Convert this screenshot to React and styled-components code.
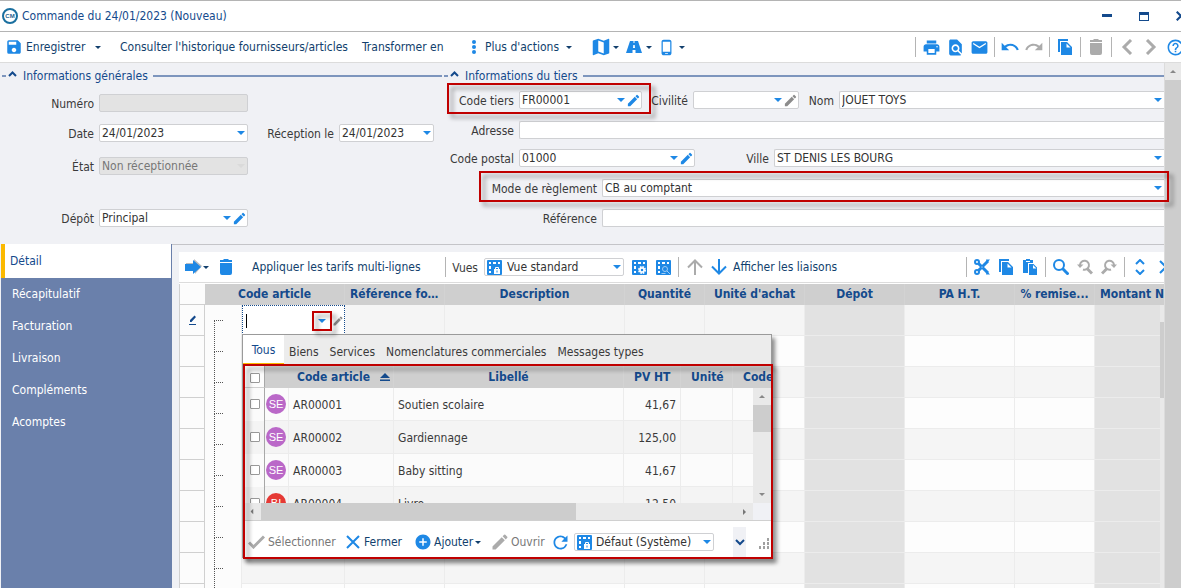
import React from 'react';
import styled, { createGlobalStyle, css } from 'styled-components';
import {
  MdAddCircle,
  MdEdit,
  MdEmail,
  MdFindInPage,
  MdHelpOutline,
  MdMap,
  MdPhoneAndroid,
  MdPrint,
  MdRedo,
  MdRefresh,
  MdSave,
  MdUndo
} from 'react-icons/md';

const blue = '#1e88e5';
const navy = '#144a8c';
const grey = '#ababab';
const red = '#c00000';

const GlobalStyles = createGlobalStyle`
  * {
    box-sizing: border-box;
  }
  body {
    margin: 0;
    overflow: hidden;
    background: #f0f1f5;
  }
  body, button, input, select {
    font-family: 'DejaVu Sans Condensed', 'DejaVu Sans', sans-serif;
    font-size: 12px;
    line-height: 16px;
    color: #3a3a3a;
  }
  button {
    border: 0;
    padding: 0;
    background: none;
    white-space: nowrap;
  }
  svg {
    display: block;
    flex: none;
  }
`;

const Shell = styled.div`
  display: flex;
  flex-direction: column;
  height: 100vh;
  overflow: hidden;
`;

const TitleBar = styled.header`
  display: flex;
  align-items: center;
  height: 32px;
  flex: none;
  padding-left: 2px;
  margin-right: -18px;
  background: #fff;
  border-top: 1px solid #b4b4b4;
  border-bottom: 1px solid #b4b4b4;
`;

const Title = styled.h1`
  flex: 1;
  margin: 0;
  padding-left: 4px;
  font-size: 12px;
  font-weight: normal;
  color: ${navy};
`;

const WindowButton = styled.button`
  display: flex;
  justify-content: center;
  width: 37px;
  color: ${navy};
`;

const MainBar = styled.div`
  display: flex;
  flex: none;
  height: 31px;
  margin-right: -6px;
  background: #fff;
  border-bottom: 1px solid #dcdcdc;
`;

const MainActions = styled.div`
  display: grid;
  grid-template-columns: 90px 25px 242px 108px 120px 36px 32px 30px;
  padding-left: 5px;
`;

const Tools = styled.div`
  display: flex;
  align-items: center;
  margin-left: auto;
`;

const Tool = styled.button`
  display: flex;
  align-items: center;
  justify-content: center;
  width: 24px;
  height: 24px;
  color: ${p => (p.disabled ? grey : blue)};
`;

const Separator = styled.div`
  width: 1px;
  height: 20px;
  margin: 0 3px;
  background: #b4b4b4;
`;

const Action = styled.button`
  display: flex;
  align-items: center;
  gap: ${p => p.$gap || 4}px;
  color: ${p => (p.disabled ? '#777' : '#123f6d')};
  > svg {
    color: ${p => (p.disabled ? grey : blue)};
  }
`;

const Body = styled.div`
  display: flex;
  flex: 1;
  min-height: 0;
`;

const Content = styled.main`
  display: flex;
  flex-direction: column;
  flex: 1;
  min-width: 0;
`;

const PageScroll = styled.div`
  display: flex;
  justify-content: center;
  width: 17px;
  flex: none;
  padding-top: 7px;
  color: #888;
  background: linear-gradient(#e9e9e9 17px, #cdcdcd 17px);
  border-left: 1px solid #dcdcdc;
`;

const Form = styled.form`
  display: grid;
  grid-template-columns: 442px 1fr;
  flex: none;
  padding-bottom: 17px;
`;

const Legend = styled.h2`
  display: flex;
  align-items: center;
  height: 26px;
  margin: 0;
  padding-left: 2px;
  font-size: 12px;
  font-weight: normal;
  color: ${navy};
  svg {
    margin: 0 6px 4px 2px;
  }
  &::before,
  &::after {
    content: '';
    width: 4px;
    height: 2px;
    background: #7d95bd;
  }
  &::after {
    flex: 1;
    margin-left: 5px;
  }
`;

const Rows = styled.div`
  display: grid;
  grid-template-rows: ${p => p.$rows};
  padding-top: ${p => p.$top}px;
`;

const Line = styled.div`
  position: relative;
  display: flex;
  align-items: center;
  gap: 5px;
  height: 18px;
`;

const Label = styled.label`
  flex: none;
  width: ${p => p.$w}px;
  padding-top: 2px;
  text-align: right;
  white-space: nowrap;
`;

const Box = styled.div`
  position: relative;
  display: flex;
  align-items: center;
  gap: ${p => p.$gap || 1}px;
  height: 18px;
  width: ${p => (p.$w ? `${p.$w}px` : 'auto')};
  flex: ${p => (p.$w ? 'none' : '1')};
  min-width: 0;
  padding: 0 ${p => (p.$edit ? 0 : 2)}px 0 2px;
  background: ${p => (p.$off ? '#e3e3e3' : '#fff')};
  border: 1px solid #cfd0d3;
  border-radius: 2px;
  ${p =>
    !p.$w &&
    css`
      border-right: 0;
      border-radius: 2px 0 0 2px;
    `}
`;

const control = css`
  flex: 1;
  min-width: 0;
  height: 16px;
  padding: 0;
  border: 0;
  outline: 0;
  background: transparent;
  color: #333;
  &:disabled {
    color: #777;
    opacity: 1;
  }
`;

const Input = styled.input`
  ${control}
`;

const Select = styled.select`
  ${control}
  appearance: none;
`;

const EditButton = styled.button`
  display: flex;
  color: ${p => (p.disabled ? '#8c8c8c' : blue)};
`;

const Frame = styled.div`
  position: absolute;
  z-index: 3;
  top: ${p => p.$top}px;
  right: ${p => p.$right}px;
  bottom: ${p => p.$bottom}px;
  left: ${p => p.$left}px;
  border: 2px solid ${red};
  filter: drop-shadow(4px 4px 2px rgba(0, 0, 0, 0.4));
  pointer-events: none;
`;

const Lower = styled.div`
  display: flex;
  flex: 1;
  min-height: 0;
`;

const Nav = styled.nav`
  display: flex;
  flex-direction: column;
  width: 172px;
  flex: none;
  background: #6a80ab;
  border-left: 1px solid #f0f1f5;
`;

const NavLink = styled.a`
  display: flex;
  align-items: center;
  height: 32px;
  padding-left: 11px;
  color: #fff;
  text-decoration: none;
  ${p =>
    p.$active &&
    css`
      height: 34px;
      margin-right: 1px;
      padding-left: 5px;
      color: ${navy};
      background: #fff;
      border-left: 4px solid #fbb900;
    `}
`;

const Detail = styled.section`
  display: flex;
  flex-direction: column;
  flex: 1;
  min-width: 0;
  padding: 7px 0 0 7px;
  border-top: 1px solid #c4c4c8;
`;

const GridBar = styled.div`
  display: flex;
  flex: none;
  height: 31px;
  overflow: hidden;
  background: #fff;
  border-bottom: 1px solid #dcdcdc;
`;

const GridActions = styled.div`
  display: grid;
  align-items: center;
  grid-template-columns: 29px 38px 190px 10px 32px 143px 24px 24px 8px 24px 26px 130px;
  padding-left: 6px;
`;

const GridTools = styled(Tools)`
  margin-right: -12px;
`;

const GridArea = styled.div`
  position: relative;
  flex: 1;
  min-height: 0;
  overflow: hidden;
  padding-top: 1px;
  background: #fff;
`;

const Grid = styled.table`
  table-layout: fixed;
  width: 100%;
  min-width: 1026px;
  border-spacing: 0;
`;

const Th = styled.th`
  height: 21px;
  padding: 0 5px 2px;
  overflow: hidden;
  text-overflow: ellipsis;
  white-space: nowrap;
  text-align: ${p => p.$align || 'center'};
  color: ${navy};
  background: #cfcfcf;
  border-right: 1px solid #d3d3d3;
`;

const MarkHead = styled.th`
  background: #fcfcfc;
  border: solid #d0d0d0;
  border-width: 0 0 1px 1px;
`;

const MarkCell = styled.td`
  padding: 0 0 0 9px;
  color: ${navy};
  background: #fcfcfc;
  border: solid #d0d0d0;
  border-width: 0 1px 1px 1px;
`;

const TreeCell = styled.td`
  position: relative;
  padding: 0;
  background: #fcfcfc;
  border-right: 1px solid #ececec;
  &::before {
    content: '';
    position: absolute;
    z-index: 1;
    top: 15px;
    left: 9px;
    width: 8px;
    height: 31px;
    border: dotted #555;
    border-width: 1px 0 0 1px;
  }
`;

const Cell = styled.td`
  height: 31px;
  padding: 0;
  background: ${p => (p.$shaded ? '#e2e2e2' : p.$odd ? '#f5f5f5' : '#fdfdfd')};
  border: solid #ececec;
  border-width: 0 1px 1px 0;
`;

const GridScroll = styled.div`
  position: absolute;
  top: 22px;
  right: 0;
  bottom: 0;
  width: 4px;
  padding-top: 17px;
  background: #e9e9e9;
`;

const GridThumb = styled.div`
  height: 76px;
  background: #cdcdcd;
`;

const Editor = styled.div`
  position: relative;
  display: flex;
  align-items: center;
  height: 30px;
  margin-right: -1px;
  padding: 0 0 0 3px;
  background: #fff;
  border: 1px dotted ${navy};
  border-bottom: 0;
`;

const TextCursor = styled.span`
  width: 1px;
  height: 14px;
  background: #000;
`;

const OpenButton = styled.button`
  position: relative;
  display: flex;
  align-items: center;
  justify-content: center;
  width: 20px;
  height: 20px;
`;

const Popup = styled.div`
  position: absolute;
  z-index: 2;
  top: 28px;
  left: -1px;
  width: 530px;
  background: #fff;
  border: 1px solid #9a9a9a;
  border-bottom: 0;
  box-shadow: 3px 4px 4px rgba(0, 0, 0, 0.45);
`;

const Tabs = styled.div`
  display: flex;
  height: 29px;
  background: #ececec;
`;

const Tab = styled.button`
  padding: 4px 0 0 0;
  margin-left: 11px;
  ${p =>
    p.$active &&
    css`
      width: 41px;
      margin: 0 -6px 0 0;
      padding: 2px 0 0 0;
      color: ${navy};
      background: #fff;
      border-bottom: 1px solid #fbb900;
    `}
`;

const ListArea = styled.div`
  position: relative;
  height: 139px;
  overflow: hidden;
`;

const List = styled.table`
  table-layout: fixed;
  width: 549px;
  border-spacing: 0;
`;

const ListTh = styled(Th)`
  height: 24px;
  padding: ${p => (p.$sorted ? '1px 3px 0 0' : '1px 10px 0')};
  text-overflow: clip;
`;

const Sort = styled.div`
  display: flex;
  align-items: center;
  justify-content: flex-end;
  gap: 10px;
`;

const CheckTh = styled.th`
  padding: 4px 0 0 7px;
  background: #fcfcfc;
  border-right: 1px solid #a8a8a8;
  border-bottom: 1px solid #d0d0d0;
`;

const CheckTd = styled.td`
  padding: 0 0 2px 7px;
  border-right: 1px solid #a8a8a8;
`;

const Checkbox = styled.input`
  display: block;
  appearance: none;
  width: 10px;
  height: 10px;
  margin: 0;
  background: #fff;
  border: 1px solid #999;
  border-radius: 1px;
`;

const ListTr = styled.tr`
  background: ${p => (p.$odd ? '#fbfbfb' : '#f4f4f4')};
`;

const ListTd = styled.td`
  height: 33px;
  padding: 2px 4px 0;
  text-align: ${p => p.$align || 'left'};
  white-space: nowrap;
  border: solid #ececec;
  border-width: 0 1px 1px 0;
`;

const BadgeTd = styled(ListTd)`
  padding: 0 1px;
`;

const Badge = styled.div`
  width: 20px;
  height: 20px;
  border-radius: 50%;
  text-align: center;
  font: 11px/20px 'Liberation Sans', sans-serif;
  color: #fff;
  background: ${p => (p.children === 'SE' ? '#ba68c8' : '#e53935')};
`;

const ListScroll = styled.div`
  position: absolute;
  top: 24px;
  right: 0;
  bottom: 0;
  width: 18px;
  display: flex;
  flex-direction: column;
  align-items: center;
  padding: 7px 0;
  color: #888;
  background: linear-gradient(#e9e9e9 17px, #cdcdcd 17px, #cdcdcd 44px, #e9e9e9 44px);
`;

const Down = styled.div`
  margin-top: auto;
  transform: rotate(180deg);
`;

const ListHScroll = styled.div`
  display: grid;
  grid-template-columns: 18px 315px 1fr 17px 18px;
  height: 18px;
  color: #777;
  background: #e9e9e9;
  border-bottom: 1px solid #d0d0d0;
`;

const HButton = styled.div`
  display: flex;
  align-items: center;
  justify-content: center;
  transform: rotate(${p => p.$turn}deg);
`;

const HThumb = styled.div`
  background: #cdcdcd;
`;

const Corner = styled.div`
  background: #f0f1f5;
`;

const PopupBar = styled.div`
  display: grid;
  align-items: center;
  grid-template-columns: 98px 68px 76px 58px 26px 140px 1fr 13px 25px;
  height: 37px;
  padding: 5px 0 0 5px;
`;

const Expand = styled.button`
  display: flex;
  align-items: center;
  justify-content: center;
  grid-column: 8;
  height: 30px;
  color: ${navy};
  background: #f0f1f5;
`;

const GripArea = styled.div`
  display: flex;
  justify-content: flex-end;
  padding: 4px 1px 0 0;
`;

const Caret = ({ color = '#123f6d', w = 6 }) => (
  <svg width={w} height={w / 2} viewBox="0 0 8 4">
    <path d="M0 0h8L4 4z" fill={color} />
  </svg>
);

const ScrollArrow = () => (
  <svg width="6" height="3" viewBox="0 0 6 3">
    <path d="M0 3h6L3 0z" fill="currentColor" />
  </svg>
);

const Logo = () => (
  <svg width="16" height="16" viewBox="0 0 16 16">
    <circle cx="8" cy="8" r="7" fill="#fff" stroke="#1a6f9f" strokeWidth="2" />
    <text x="8" y="10" textAnchor="middle" fontSize="6" fontWeight="bold" fontFamily="Liberation Sans" fill="#1a5f8f">
      CM
    </text>
  </svg>
);

const Collapse = () => (
  <svg width="9" height="6" viewBox="0 0 9 6">
    <path d="M1 5l3.500-3.500L8 5" fill="none" stroke={navy} strokeWidth="2" />
  </svg>
);

const Cross = ({ size, width }) => (
  <svg width={size} height={size} viewBox="0 0 14 14">
    <path d="M1 1l12 12M13 1L1 13" fill="none" stroke="currentColor" strokeWidth={width} />
  </svg>
);

const Check = () => (
  <svg width="17" height="14" viewBox="0 0 17 14">
    <path d="M1 7.500l4.500 4.500L16 1.500" fill="none" stroke="currentColor" strokeWidth="3" />
  </svg>
);

const Dots = () => (
  <svg width="8" height="14" viewBox="0 0 8 14">
    <circle cx="4" cy="2" r="2" fill="currentColor" />
    <circle cx="4" cy="7" r="2" fill="currentColor" />
    <circle cx="4" cy="12" r="2" fill="currentColor" />
  </svg>
);

const Road = () => (
  <svg width="16" height="12" viewBox="0 0 16 12">
    <path
      d="M4 0h3.500v2h1V0H12l4 12H9.500V9h-3v3H0zM7.300 4L7 7h2l-.3-3z"
      fill="currentColor"
      fillRule="evenodd"
    />
  </svg>
);

const Trash = () => (
  <svg width="12" height="16" viewBox="0 0 12 16">
    <path d="M0 1h3l1-1h4l1 1h3v2H0zM0 4h12v10q0 2-2 2H2q-2 0-2-2z" fill="currentColor" />
  </svg>
);

const Scissors = () => (
  <svg width="16" height="16" viewBox="0 0 16 16">
    <g fill="none" stroke="currentColor" strokeWidth="2">
      <circle cx="3" cy="3" r="2" />
      <circle cx="3" cy="13" r="2" />
    </g>
    <path d="M4.500 4.500L14 14M4.500 11.500L14 2" stroke="currentColor" strokeWidth="3" />
    <path d="M12 15.500h4L13 12zM12 .5h4L13 4z" fill="currentColor" />
    <circle cx="8" cy="8" r="0.600" fill="#fff" />
  </svg>
);

const Copy = () => (
  <svg width="15" height="16" viewBox="0 0 15 16">
    <path d="M0 0h10v2H2v11H0z" fill="currentColor" />
    <path d="M3 3h6l5 5v8H3zM8.500 4.500v4h4z" fill="currentColor" fillRule="evenodd" />
  </svg>
);

const Paste = () => (
  <svg width="15" height="16" viewBox="0 0 15 16">
    <path d="M0 1h3V0h4v1h3v3H5v10H0z" fill="currentColor" />
    <path d="M6 5h4.500L14 8.500V16H6zM10 6v3.500h3.500z" fill="currentColor" fillRule="evenodd" />
    <path d="M3 2.500h4" stroke="#fff" />
  </svg>
);

const Chevron = ({ d }) => (
  <svg width="16" height="16" viewBox="0 0 16 16">
    <path d={d} fill="none" stroke="currentColor" strokeWidth="3" />
  </svg>
);

const Fold = ({ d }) => (
  <svg width="10" height="16" viewBox="0 0 10 16">
    <path d={d} fill="none" stroke="currentColor" strokeWidth="2" />
  </svg>
);

const BigArrow = () => (
  <svg width="17" height="16" viewBox="0 0 17 16">
    <path d="M1 4h8V0l8 7-7 8V12H1z" fill="#b9bcc0" />
    <path d="M0 5h8V1l8 7-8 7v-3H0z" fill="currentColor" />
  </svg>
);

const Arrow = ({ down }) => (
  <svg width="16" height="16" viewBox="0 0 16 16">
    <path
      d={down ? 'M8 0v14M1 7.500L8 14.500L15 7.500' : 'M8 16V2M1 8.500L8 1.500L15 8.500'}
      fill="none"
      stroke="currentColor"
      strokeWidth="2"
    />
  </svg>
);

const ViewIcon = ({ mark }) => (
  <svg width="15" height="15" viewBox="0 0 15 15">
    <rect width="15" height="15" rx="1" fill={blue} />
    <path
      d="M2 2h2v2H2zM6 2h3v2H6zM11 2h2v2h-2zM2 6h2v3H2zM2 11h2v2H2z"
      fill="#fff"
    />
    {mark === 'lock' && (
      <g>
        <path d="M7 9h6v5H7z" fill="#fff" />
        <path d="M8.500 9V7.500h3V9" fill="none" stroke="#fff" />
        <path d="M9.500 10.500h1v2h-1z" fill={blue} />
      </g>
    )}
    {mark === 'gear' && (
      <g>
        <circle cx="10" cy="10" r="3" fill="none" stroke="#fff" strokeWidth="2" strokeDasharray="1.600 0.750" />
        <circle cx="10" cy="10" r="2" fill="none" stroke="#fff" strokeWidth="1.500" />
      </g>
    )}
    {mark === 'find' && (
      <g>
        <circle cx="9" cy="9" r="2.500" fill="none" stroke="#9fcbf3" />
        <path d="M11 11l3 3M5.500 13.500h4" stroke="#9fcbf3" />
      </g>
    )}
  </svg>
);

const Search = ({ turn }) => (
  <svg width="16" height="16" viewBox="0 0 16 16">
    {!turn && <circle cx="6" cy="6" r="5" fill="none" stroke="currentColor" strokeWidth="2" />}
    {!turn && <path d="M9.500 9.500l6 6" stroke="currentColor" strokeWidth="3" />}
    {turn && (
      <g transform={turn === 'right' ? 'matrix(-1 0 0 1 16 0)' : undefined}>
        <path d="M3 6a4.500 4.500 0 1 1 3 4.500" fill="none" stroke="currentColor" strokeWidth="2" />
        <path d="M0 5.500h6.500L3 9z" fill="currentColor" />
        <path d="M10 9.500l5 5" stroke="currentColor" strokeWidth="3" />
      </g>
    )}
  </svg>
);

const RowPencil = () => (
  <svg width="8" height="10" viewBox="0 0 8 10">
    <path d="M1 7V5l4.500-4.500L7 2 2.500 7zM0 9h7v1H0z" fill="currentColor" />
  </svg>
);

const SortMark = () => (
  <svg width="10" height="8" viewBox="0 0 10 8">
    <path d="M0 5l5-5 5 5zM0 6.500h10V8H0z" fill={navy} />
  </svg>
);

const Grip = () => (
  <svg width="12" height="12" viewBox="0 0 12 12">
    <path
      d="M9 0h2v3H9zM5 4h2v3H5zM9 4h2v3H9zM1 8h2v3H1zM5 8h2v3H5zM9 8h2v3H9z"
      fill="#a0a0a0"
    />
  </svg>
);

const Combo = ({ id, value, w, off, edit, label }) => (
  <Box $w={w} $off={off} $edit={edit}>
    <Select id={id} defaultValue={value} disabled={off} aria-label={label}>
      <option>{value}</option>
    </Select>
    <Caret color={off ? '#dadada' : blue} w={8} />
    {edit && (
      <EditButton type="button" aria-label="Modifier" disabled={edit === 'off'}>
        <MdEdit size={15} />
      </EditButton>
    )}
  </Box>
);

const columns = [
  ['Référence fo...', 100],
  ['Description', 180],
  ['Quantité', 80],
  ["Unité d'achat", 100],
  ['Dépôt', 100, true],
  ['PA H.T.', 110],
  ['% remise...', 80],
  ['Montant N', 110, true]
];

const articles = [
  ['SE', 'AR00001', 'Soutien scolaire', '41,67'],
  ['SE', 'AR00002', 'Gardiennage', '125,00'],
  ['SE', 'AR00003', 'Baby sitting', '41,67'],
  ['BI', 'AR00004', 'Livre', '12,50']
];

const navItems = ['Détail', 'Récapitulatif', 'Facturation', 'Livraison', 'Compléments', 'Acomptes'];
const tabItems = ['Tous', 'Biens', 'Services', 'Nomenclatures commerciales', 'Messages types'];

const ArticlePopup = () => (
  <Popup>
    <Tabs>
      {tabItems.map((tab, i) => (
        <Tab key={tab} $active={i === 0}>
          {tab}
        </Tab>
      ))}
    </Tabs>
    <ListArea>
      <List>
        <colgroup>
          {[22, 24, 105, 230, 57, 52, 59].map((w, i) => (
            <col key={i} width={w} />
          ))}
        </colgroup>
        <thead>
          <tr>
            <CheckTh>
              <Checkbox type="checkbox" aria-label="Tout cocher" />
            </CheckTh>
            <ListTh colSpan={2} $sorted>
              <Sort>
                Code article <SortMark />
              </Sort>
            </ListTh>
            <ListTh>Libellé</ListTh>
            <ListTh>PV HT</ListTh>
            <ListTh>Unité</ListTh>
            <ListTh $align="left">Code</ListTh>
          </tr>
        </thead>
        <tbody>
          {articles.map(([kind, code, name, price], i) => (
            <ListTr key={code} $odd={i % 2 === 0}>
              <CheckTd>
                <Checkbox type="checkbox" aria-label={code} />
              </CheckTd>
              <BadgeTd>
                <Badge>{kind}</Badge>
              </BadgeTd>
              <ListTd>{code}</ListTd>
              <ListTd>{name}</ListTd>
              <ListTd $align="right">{price}</ListTd>
              <ListTd />
              <ListTd />
            </ListTr>
          ))}
        </tbody>
      </List>
      <ListScroll>
        <ScrollArrow />
        <Down>
          <ScrollArrow />
        </Down>
      </ListScroll>
    </ListArea>
    <ListHScroll>
      <HButton $turn={-90}>
        <ScrollArrow />
      </HButton>
      <HThumb />
      <div />
      <HButton $turn={90}>
        <ScrollArrow />
      </HButton>
      <Corner />
    </ListHScroll>
    <PopupBar>
      <Action disabled $gap={3}>
        <Check />
        Sélectionner
      </Action>
      <Action>
        <Cross size={14} width={2} />
        Fermer
      </Action>
      <Action $gap={2}>
        <MdAddCircle size={18} />
        Ajouter
        <Caret />
      </Action>
      <Action disabled $gap={1}>
        <MdEdit size={20} />
        Ouvrir
      </Action>
      <Tool aria-label="Actualiser">
        <MdRefresh size={21} />
      </Tool>
      <Box $w={140} $gap={4}>
        <ViewIcon mark="lock" />
        <Select aria-label="Vue de la liste" defaultValue="Défaut (Système)">
          <option>Défaut (Système)</option>
        </Select>
        <Caret color={blue} w={8} />
      </Box>
      <Expand aria-label="Plus">
        <svg width="10" height="7" viewBox="0 0 10 7">
          <path d="M1 1l4 4 4-4" fill="none" stroke="currentColor" strokeWidth="2" />
        </svg>
      </Expand>
      <GripArea>
        <Grip />
      </GripArea>
    </PopupBar>
    <Frame $top={29} $right={-2} $bottom={-1} $left={0} />
  </Popup>
);

function App() {
  return (
    <Shell>
      <GlobalStyles />
      <TitleBar>
        <Logo />
        <Title>Commande du 24/01/2023 (Nouveau)</Title>
        <WindowButton aria-label="Réduire">
          <svg width="10" height="10" viewBox="0 0 10 10">
            <path d="M0 3h10v3H0z" fill={navy} />
          </svg>
        </WindowButton>
        <WindowButton aria-label="Agrandir">
          <svg width="10" height="9" viewBox="0 0 10 9">
            <path d="M0 0h10v9H0zM1 3v5h8V3z" fill={navy} fillRule="evenodd" />
          </svg>
        </WindowButton>
        <WindowButton aria-label="Fermer">
          <Cross size={10} width={3} />
        </WindowButton>
      </TitleBar>

      <MainBar>
        <MainActions>
          <Action $gap={3}>
            <MdSave size={18} />
            Enregistrer
          </Action>
          <Action aria-label="Options d'enregistrement">
            <Caret />
          </Action>
          <Action>Consulter l'historique fournisseurs/articles</Action>
          <Action>Transformer en</Action>
          <Action $gap={7}>
            <Dots />
            Plus d'actions
            <Caret />
          </Action>
          <Action aria-label="Carte" $gap={1}>
            <MdMap size={22} />
            <Caret />
          </Action>
          <Action aria-label="Itinéraire">
            <Road />
            <Caret />
          </Action>
          <Action aria-label="Téléphone">
            <MdPhoneAndroid size={17} />
            <Caret />
          </Action>
        </MainActions>
        <Tools>
          <Separator />
          <Tool aria-label="Imprimer">
            <MdPrint size={19} />
          </Tool>
          <Tool aria-label="Aperçu">
            <MdFindInPage size={19} />
          </Tool>
          <Tool aria-label="Courriel">
            <MdEmail size={19} />
          </Tool>
          <Separator />
          <Tool aria-label="Annuler">
            <MdUndo size={20} />
          </Tool>
          <Tool aria-label="Rétablir" disabled>
            <MdRedo size={20} />
          </Tool>
          <Separator />
          <Tool aria-label="Dupliquer">
            <Copy />
          </Tool>
          <Separator />
          <Tool aria-label="Supprimer" disabled>
            <Trash />
          </Tool>
          <Separator />
          <Tool aria-label="Précédent" disabled>
            <Chevron d="M12 1L5 8l7 7" />
          </Tool>
          <Tool aria-label="Suivant" disabled>
            <Chevron d="M4 1l7 7-7 7" />
          </Tool>
          <Tool aria-label="Aide">
            <MdHelpOutline size={19} />
          </Tool>
        </Tools>
      </MainBar>

      <Body>
        <Content>
          <Form>
            <div>
              <Legend>
                <Collapse />
                Informations générales
              </Legend>
              <Rows $top={5} $rows="30px 33px 52px 18px">
                <Line>
                  <Label $w={94} htmlFor="numero">
                    Numéro
                  </Label>
                  <Box $w={149} $off>
                    <Input id="numero" disabled />
                  </Box>
                </Line>
                <Line>
                  <Label $w={94} htmlFor="date">
                    Date
                  </Label>
                  <Combo id="date" value="24/01/2023" w={149} />
                  <Label $w={81} htmlFor="reception">
                    Réception le
                  </Label>
                  <Combo id="reception" value="24/01/2023" w={95} />
                </Line>
                <Line>
                  <Label $w={94} htmlFor="etat">
                    État
                  </Label>
                  <Combo id="etat" value="Non réceptionnée" w={149} off />
                </Line>
                <Line>
                  <Label $w={94} htmlFor="depot">
                    Dépôt
                  </Label>
                  <Combo id="depot" value="Principal" w={149} edit="on" />
                </Line>
              </Rows>
            </div>
            <div>
              <Legend>
                <Collapse />
                Informations du tiers
              </Legend>
              <Rows $top={2} $rows="30px 28px 30px 30px 18px">
                <Line>
                  <Label $w={72} htmlFor="tiers">
                    Code tiers
                  </Label>
                  <Combo id="tiers" value="FR00001" w={123} edit="on" />
                  <Label $w={41} htmlFor="civilite">
                    Civilité
                  </Label>
                  <Combo id="civilite" value="" w={106} edit="off" />
                  <Label $w={30} htmlFor="nom">
                    Nom
                  </Label>
                  <Combo id="nom" value="JOUET TOYS" />
                  <Frame $top={-8} $right={513} $bottom={-5} $left={5} />
                </Line>
                <Line>
                  <Label $w={72} htmlFor="adresse">
                    Adresse
                  </Label>
                  <Box>
                    <Input id="adresse" />
                  </Box>
                </Line>
                <Line>
                  <Label $w={72} htmlFor="cp">
                    Code postal
                  </Label>
                  <Combo id="cp" value="01000" w={176} edit="on" />
                  <Label $w={69} htmlFor="ville">
                    Ville
                  </Label>
                  <Combo id="ville" value="ST DENIS LES BOURG" />
                </Line>
                <Line>
                  <Label $w={155} htmlFor="reglement">
                    Mode de règlement
                  </Label>
                  <Combo id="reglement" value="CB au comptant" />
                  <Frame $top={-8} $right={-5} $bottom={-5} $left={37} />
                </Line>
                <Line>
                  <Label $w={155} htmlFor="reference">
                    Référence
                  </Label>
                  <Box>
                    <Input id="reference" />
                  </Box>
                </Line>
              </Rows>
            </div>
          </Form>

          <Lower>
            <Nav>
              {navItems.map((item, i) => (
                <NavLink key={item} href={`#${i}`} $active={i === 0}>
                  {item}
                </NavLink>
              ))}
            </Nav>
            <Detail>
              <GridBar>
                <GridActions>
                  <Action aria-label="Insérer" $gap={1}>
                    <BigArrow />
                    <Caret />
                  </Action>
                  <Tool aria-label="Supprimer la ligne">
                    <Trash />
                  </Tool>
                  <Action>Appliquer les tarifs multi-lignes</Action>
                  <Separator />
                  <Label $w={26} htmlFor="vue">
                    Vues
                  </Label>
                  <Box $w={140} $gap={5}>
                    <ViewIcon mark="lock" />
                    <Select id="vue" defaultValue="Vue standard">
                      <option>Vue standard</option>
                    </Select>
                    <Caret color={blue} w={8} />
                  </Box>
                  <Tool aria-label="Configurer la vue">
                    <ViewIcon mark="gear" />
                  </Tool>
                  <Tool aria-label="Rechercher une vue">
                    <ViewIcon mark="find" />
                  </Tool>
                  <Separator />
                  <Tool aria-label="Monter" disabled>
                    <Arrow />
                  </Tool>
                  <Tool aria-label="Descendre">
                    <Arrow down />
                  </Tool>
                  <Action>Afficher les liaisons</Action>
                </GridActions>
                <GridTools>
                  <Separator />
                  <Tool aria-label="Couper">
                    <Scissors />
                  </Tool>
                  <Tool aria-label="Copier">
                    <Copy />
                  </Tool>
                  <Tool aria-label="Coller">
                    <Paste />
                  </Tool>
                  <Separator />
                  <Tool aria-label="Rechercher">
                    <Search />
                  </Tool>
                  <Tool aria-label="Rechercher le précédent" disabled>
                    <Search turn="left" />
                  </Tool>
                  <Tool aria-label="Rechercher le suivant" disabled>
                    <Search turn="right" />
                  </Tool>
                  <Separator />
                  <Tool aria-label="Tout déplier">
                    <Fold d="M1 5l4-4 4 4M1 11l4 4 4-4" />
                  </Tool>
                  <Tool aria-label="Tout replier">
                    <Fold d="M1 2l4 4 4-4M1 14l4-4 4 4" />
                  </Tool>
                </GridTools>
              </GridBar>
              <GridArea>
                <Grid>
                  <colgroup>
                    <col width="26" />
                    <col width="37" />
                    <col width="103" />
                    {columns.map(([name, width]) => (
                      <col key={name} width={width} />
                    ))}
                  </colgroup>
                  <thead>
                    <tr>
                      <MarkHead />
                      <Th colSpan={2}>Code article</Th>
                      {columns.map(([name]) => (
                        <Th key={name} $align={name === 'Montant N' ? 'left' : 'center'}>
                          {name}
                        </Th>
                      ))}
                    </tr>
                  </thead>
                  <tbody>
                    {Array.from({ length: 10 }, (_, row) => (
                      <tr key={row}>
                        <MarkCell>{row === 0 && <RowPencil />}</MarkCell>
                        <TreeCell />
                        <Cell $odd={row % 2 === 0}>
                          {row === 0 && (
                            <Editor>
                              <TextCursor />
                              <Input aria-label="Code article" />
                              <OpenButton aria-label="Ouvrir la liste">
                                <Caret color={blue} w={8} />
                                <Frame $top={0} $right={0} $bottom={0} $left={0} />
                              </OpenButton>
                              <EditButton aria-label="Modifier l'article" disabled>
                                <MdEdit size={12} />
                              </EditButton>
                              <ArticlePopup />
                            </Editor>
                          )}
                        </Cell>
                        {columns.map(([name, , shaded]) => (
                          <Cell key={name} $odd={row % 2 === 0} $shaded={shaded} />
                        ))}
                      </tr>
                    ))}
                  </tbody>
                </Grid>
                <GridScroll>
                  <GridThumb />
                </GridScroll>
              </GridArea>
            </Detail>
          </Lower>
        </Content>
        <PageScroll>
          <ScrollArrow />
        </PageScroll>
      </Body>
    </Shell>
  );
}

export default App;
